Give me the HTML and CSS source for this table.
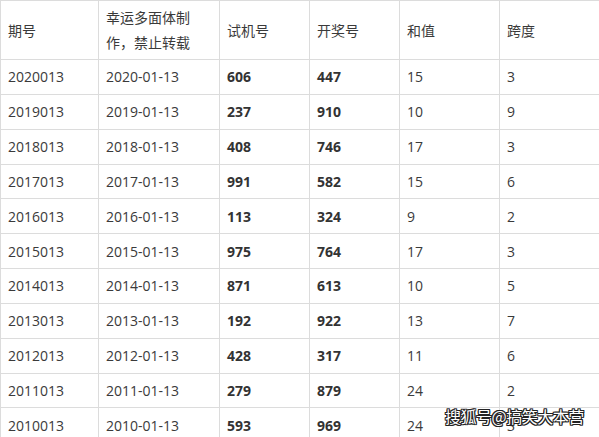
FILE: index.html
```html
<!DOCTYPE html>
<html lang="zh">
<head>
<meta charset="utf-8">
<link rel="stylesheet" href="styles.css">
</head>
<body>
<div class="wrap">
<table class="lottery">
<colgroup>
<col class="c1"><col class="c2"><col class="c3"><col class="c4"><col class="c5"><col class="c6">
</colgroup>
<thead>
<tr><th>期号</th><th>幸运多面体制作，禁止转载</th><th>试机号</th><th>开奖号</th><th>和值</th><th>跨度</th></tr>
</thead>
<tbody>
<tr><td>2020013</td><td>2020-01-13</td><td class="b">606</td><td class="b">447</td><td>15</td><td>3</td></tr>
<tr><td>2019013</td><td>2019-01-13</td><td class="b">237</td><td class="b">910</td><td>10</td><td>9</td></tr>
<tr><td>2018013</td><td>2018-01-13</td><td class="b">408</td><td class="b">746</td><td>17</td><td>3</td></tr>
<tr><td>2017013</td><td>2017-01-13</td><td class="b">991</td><td class="b">582</td><td>15</td><td>6</td></tr>
<tr><td>2016013</td><td>2016-01-13</td><td class="b">113</td><td class="b">324</td><td>9</td><td>2</td></tr>
<tr><td>2015013</td><td>2015-01-13</td><td class="b">975</td><td class="b">764</td><td>17</td><td>3</td></tr>
<tr><td>2014013</td><td>2014-01-13</td><td class="b">871</td><td class="b">613</td><td>10</td><td>5</td></tr>
<tr><td>2013013</td><td>2013-01-13</td><td class="b">192</td><td class="b">922</td><td>13</td><td>7</td></tr>
<tr><td>2012013</td><td>2012-01-13</td><td class="b">428</td><td class="b">317</td><td>11</td><td>6</td></tr>
<tr><td>2011013</td><td>2011-01-13</td><td class="b">279</td><td class="b">879</td><td>24</td><td>2</td></tr>
<tr><td>2010013</td><td>2010-01-13</td><td class="b">593</td><td class="b">969</td><td>24</td><td>3</td></tr>
</tbody>
</table>
<div class="watermark">搜狐号@搞笑大本营</div>
</div>
</body>
</html>
```
FILE: styles.css
```css
html, body {
  margin: 0;
  padding: 0;
  background: #fff;
  overflow: hidden;
}
.wrap {
  position: relative;
  width: 599px;
  height: 437px;
  overflow: hidden;
}
.lottery {
  border-collapse: collapse;
  table-layout: fixed;
  width: 599px;
  font-family: "Open Sans", "Noto Sans CJK SC", sans-serif;
  font-size: 14px;
  color: #3a3a3a;
}
.c1 { width: 98px; }
.c2 { width: 121px; }
.c3 { width: 90px; }
.c4 { width: 90px; }
.c5 { width: 100px; }
.c6 { width: 100px; }
.lottery th,
.lottery td {
  border: 1px solid #dcdcdc;
  padding: 0 8px 0 7px;
  text-align: left;
  vertical-align: middle;
  font-weight: normal;
  line-height: 25px;
}
.lottery th {
  height: 58px;
}
.lottery td {
  height: 33.85px;
}
.lottery td.b {
  font-weight: bold;
  color: #333;
}
.watermark {
  position: absolute;
  left: 445px;
  top: 405px;
  font-family: "Noto Sans CJK SC", sans-serif;
  font-size: 16px;
  line-height: 22px;
  color: #fff;
  letter-spacing: -0.5px;
  text-shadow: -1px -1px 0 #222, 1px -1px 0 #222, -1px 1px 0 #222, 1px 1px 0 #222, 0 1px 0 #222, 0 -1px 0 #222, 1px 0 0 #222, -1px 0 0 #222;
}
```
